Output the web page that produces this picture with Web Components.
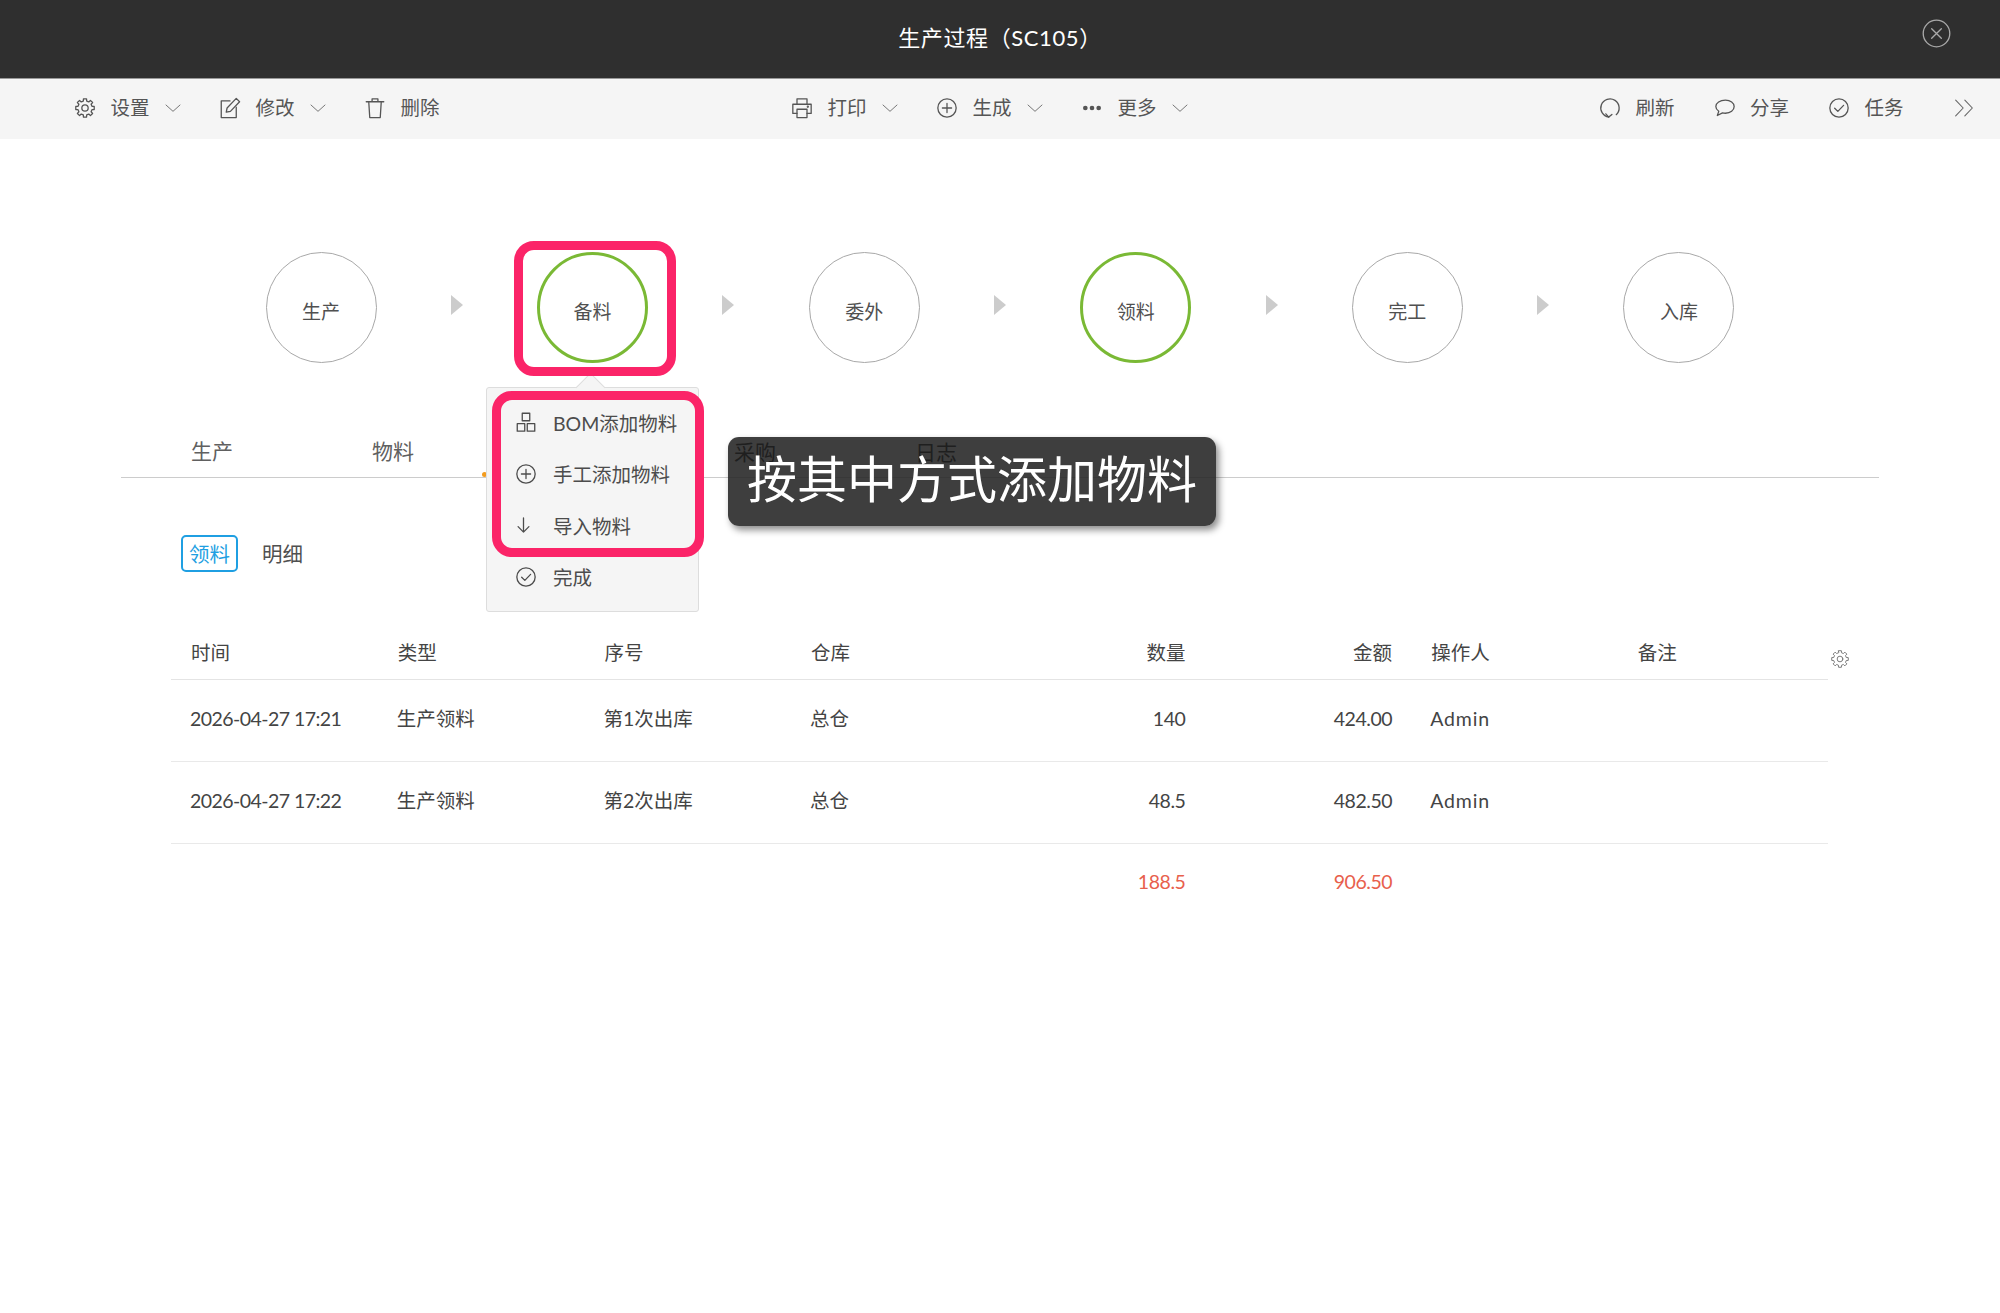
<!DOCTYPE html>
<html lang="zh-CN"><head><meta charset="utf-8"><title>生产过程</title>
<style>html,body{margin:0;padding:0;background:#fff}</style></head>
<body><sc-app></sc-app>
<script>
const FONT='Lato,"Noto Sans CJK SC",sans-serif';
function gear(){let p=[];const n=8;for(let i=0;i<n;i++){const a=i/n*2*Math.PI;const s=Math.PI/n;
[[11.2,-.42],[11.2,.42],[8.6,.6],[8.6,1.4]].forEach(([r,o])=>{const t=a+o*s;p.push((12+r*Math.sin(t)).toFixed(2)+' '+(12-r*Math.cos(t)).toFixed(2));});}
return `<path d="M${p.join('L')}Z"/><circle cx="12" cy="12" r="3.8"/>`;}
const ICONS={
gear:gear(),
edit:'<path d="M12 3.500H1.500v20h18V11"/><path d="M7.500 17l1-5L19.500.5l4 4L12.500 16z"/>',
trash:'<path d="M8.500 4.500V1h7v3.500M1.500 4.500h21M4.500 4.500l1.200 19h12.600l1.200-19"/>',
print:'<path d="M6 7.500V1h12v6.500M6 18.500H1V7.500h22v11h-5"/><path d="M6 13.500h12v10H6z"/><circle cx="19" cy="10.500" r=".6"/>',
plus:'<circle cx="12" cy="12" r="11"/><path d="M12 6.500v11M6.500 12h11"/>',
dots:'<circle cx="4" cy="12" r="2.800" fill="currentColor" stroke="none"/><circle cx="12" cy="12" r="2.800" fill="currentColor" stroke="none"/><circle cx="20" cy="12" r="2.800" fill="currentColor" stroke="none"/>',
chev:'<path d="M1.500 7.500L12 17L22.500 7.500"/>',
refresh:'<path d="M10.500 22.900A11 11 0 1 1 19.500 20"/><path d="M7 19l3.500 3.900 3.800-3.200"/>',
chat:'<path d="M12.500 2.500c6 0 10.500 3.300 10.500 7.800s-4.500 8-10.500 8c-1.300 0-2.500-.2-3.500-.5L2.800 21l1.700-5C2.300 14.500 1 12.500 1 10.300 1 5.800 6 2.500 12.500 2.500z"/>',
check:'<circle cx="12" cy="12" r="11"/><path d="M6.800 12.300l3.800 3.800L17.500 8.800"/>',
dbl:'<path d="M2 2.500l9 9.500-9 9.500M13 2.500l9 9.500-9 9.500"/>',
close:'<circle cx="12" cy="12" r="11"/><path d="M8 8l8 8M16 8l-8 8"/>',
bom:'<path d="M7.500 1.500h9v9h-9zM1.500 14h9v9h-9zM13.500 14h9v9h-9z"/>',
down:'<path d="M9 3.500v17M2.500 14L9 20.500 15.500 14"/>'
};
class ScIcon extends HTMLElement{
  constructor(){super();this.attachShadow({mode:'open'});}
  connectedCallback(){const n=this.getAttribute('name'),s=this.getAttribute('size')||20,w=this.getAttribute('sw')||1.55;
    this.shadowRoot.innerHTML=`<style>:host{display:inline-flex;flex:none;width:${s}px;height:${s}px;color:inherit}svg{width:100%;height:100%;display:block;overflow:visible}</style>
    <svg viewBox="0 0 24 24" fill="none" stroke="currentColor" stroke-width="${w}" stroke-linejoin="round" stroke-linecap="round">${ICONS[n]}</svg>`;}
}
customElements.define('sc-icon',ScIcon);

class ScTitlebar extends HTMLElement{
  constructor(){super();this.attachShadow({mode:'open'}).innerHTML=`<style>
  :host{display:grid;grid-template-columns:1fr auto 1fr;height:79px;box-sizing:border-box;background:#2f2f2f;border-bottom:1px solid #999;color:#fff;font:22px ${FONT}}
  .t{grid-column:2;padding-top:23px;line-height:30px;font-weight:400;letter-spacing:.6px}
  .x{grid-column:3;justify-self:end;margin:19px 49px 0 0;color:#a9a9a9}
  </style><div class="t"><slot></slot></div><div class="x"><sc-icon name="close" size="29" sw="1.100"></sc-icon></div>`;}
}
customElements.define('sc-titlebar',ScTitlebar);

class ScTool extends HTMLElement{
  constructor(){super();this.attachShadow({mode:'open'});}
  connectedCallback(){const caret=this.hasAttribute('caret');
    this.shadowRoot.innerHTML=`<style>
    :host{display:inline-flex;align-items:center;color:#555;font:19.500px/30px ${FONT}}
    .l{margin:0 16px 0 15.500px;width:38px;white-space:nowrap}
    :host(:not([caret])) .l{margin-right:0}
    .c{color:#777}
    </style><sc-icon name="${this.getAttribute('icon')}"></sc-icon><span class="l"><slot></slot></span>${caret?'<sc-icon class="c" name="chev" size="16" sw="1.500"></sc-icon>':''}`;}
}
customElements.define('sc-tool',ScTool);

class ScToolbar extends HTMLElement{
  constructor(){super();this.attachShadow({mode:'open'}).innerHTML=`<style>
  :host{display:grid;grid-template-columns:717px 808px 1fr;align-items:center;height:60px;box-sizing:border-box;padding:0 27px 2px 75px;background:#f5f5f5}
  .g{display:flex;align-items:center;gap:39.500px}
  .r{gap:41px}
  .m{margin-left:10px;color:#666;display:flex}
  </style>
  <div class="g"><sc-tool icon="gear" caret>设置</sc-tool><sc-tool icon="edit" caret>修改</sc-tool><sc-tool icon="trash">删除</sc-tool></div>
  <div class="g"><sc-tool icon="print" caret>打印</sc-tool><sc-tool icon="plus" caret>生成</sc-tool><sc-tool icon="dots" caret>更多</sc-tool></div>
  <div class="g r"><sc-tool icon="refresh">刷新</sc-tool><sc-tool icon="chat">分享</sc-tool><sc-tool icon="check">任务</sc-tool><span class="m"><sc-icon name="dbl" size="20" sw="1.300"></sc-icon></span></div>`;}
}
customElements.define('sc-toolbar',ScToolbar);

class ScStep extends HTMLElement{
  constructor(){super();this.attachShadow({mode:'open'}).innerHTML=`<style>
  :host{display:flex;align-items:center;width:271.600px;flex:none;color:#505050;font:19px ${FONT}}
  .c{width:111px;height:111px;box-sizing:border-box;border:1.600px solid #a8a8a8;border-radius:50%;display:flex;align-items:center;justify-content:center;padding-top:6px}
  :host([on]) .c{border:3.500px solid #7ab935}
  .a{flex:1;display:flex;justify-content:center;margin-top:-6px}
  .a i{display:block;width:0;height:0;border-left:12px solid #ccc;border-top:10.500px solid transparent;border-bottom:10.500px solid transparent}
  :host([last]) .a i{display:none}
  </style><div class="c"><slot></slot></div><div class="a"><i></i></div>`;}
}
customElements.define('sc-step',ScStep);

class ScSteps extends HTMLElement{
  constructor(){super();this.attachShadow({mode:'open'}).innerHTML=`<style>:host{display:flex;margin:113px 0 0 265.500px}</style><slot></slot>`;}
}
customElements.define('sc-steps',ScSteps);

class ScTabs extends HTMLElement{
  constructor(){super();this.attachShadow({mode:'open'}).innerHTML=`<style>
  :host{display:flex;height:55px;margin:60px 121px 0;box-sizing:border-box;border-bottom:1.500px solid #ccc;font:21px/55px ${FONT};color:#606060}
  </style><slot></slot>`;}
}
customElements.define('sc-tabs',ScTabs);

class ScTab extends HTMLElement{
  constructor(){super();this.attachShadow({mode:'open'}).innerHTML=`<style>
  :host{display:block;width:181px;box-sizing:border-box;padding-left:70px;position:relative}
  :host([dark]){color:#000;margin-top:1px}
  :host([dot])::before{content:"";position:absolute;left:-1px;top:49px;width:5px;height:5px;border-radius:50%;background:#f39c1f}
  </style><slot></slot>`;}
}
customElements.define('sc-tab',ScTab);

class ScSubtabs extends HTMLElement{
  constructor(){super();this.attachShadow({mode:'open'}).innerHTML=`<style>
  :host{display:flex;align-items:center;gap:24px;margin:57px 0 0 181px;height:37px;color:#505050;font:20.500px ${FONT}}
  span{padding-bottom:2px}
  .on{width:57px;height:37px;box-sizing:border-box;border:2px solid #1f9fe2;border-radius:5px;color:#1f9fe2;display:flex;align-items:center;justify-content:center}
  </style><span class="on">领料</span><span>明细</span>`;}
}
customElements.define('sc-subtabs',ScSubtabs);

class ScTable extends HTMLElement{
  constructor(){super();this.attachShadow({mode:'open'}).innerHTML=`<style>
  :host{display:flex;align-items:flex-start;margin:54px 0 0 171px;color:#444;font:19.500px ${FONT}}
  .tb{width:1657px;flex:none}
  .r{display:grid;grid-template-columns:repeat(8,206.700px);height:82px;box-sizing:border-box;border-bottom:1.500px solid #e9e9e9;align-items:center;padding-bottom:4px}
  .r>span{padding:0 20px 0 19px;white-space:nowrap;line-height:28px}
  .h{height:54px;padding-bottom:0;border-bottom-color:#e4e4e4;align-items:start}
  .h>span{line-height:54px;padding-left:20px}
  .f{border-bottom:0;height:76px;padding-bottom:0;color:#e8604c}
  .r>.n{text-align:right;padding-right:19px}
  .r>.num{letter-spacing:-.45px}
  .r>.d{letter-spacing:-.55px}
  .r>.a{letter-spacing:.9px}
  sc-icon{margin:24px 0 0 3px;color:#777}
  </style>
  <div class="tb">
  <div class="r h"><span>时间</span><span>类型</span><span>序号</span><span>仓库</span><span class="n">数量</span><span class="n">金额</span><span>操作人</span><span>备注</span></div>
  <div class="r"><span class="d">2026-04-27 17:21</span><span>生产领料</span><span>第1次出库</span><span>总仓</span><span class="n num">140</span><span class="n num">424.00</span><span class="a">Admin</span><span></span></div>
  <div class="r"><span class="d">2026-04-27 17:22</span><span>生产领料</span><span>第2次出库</span><span>总仓</span><span class="n num">48.5</span><span class="n num">482.50</span><span class="a">Admin</span><span></span></div>
  <div class="r f"><span></span><span></span><span></span><span></span><span class="n num">188.5</span><span class="n num">906.50</span><span></span><span></span></div>
  </div><sc-icon name="gear" size="18" sw="1.300"></sc-icon>`;}
}
customElements.define('sc-table',ScTable);

class ScMenuItem extends HTMLElement{
  constructor(){super();this.attachShadow({mode:'open'});}
  connectedCallback(){this.shadowRoot.innerHTML=`<style>
  :host{display:flex;align-items:center;height:51.500px;padding-left:29px;gap:17px;color:#4c4c4c;font:19.500px ${FONT};white-space:nowrap}
  </style><sc-icon name="${this.getAttribute('icon')}"></sc-icon><slot></slot>`;}
}
customElements.define('sc-menu-item',ScMenuItem);

class ScMenu extends HTMLElement{
  constructor(){super();this.attachShadow({mode:'open'}).innerHTML=`<style>
  :host{display:block;position:absolute;left:486px;top:387px;width:213px;height:225px;box-sizing:border-box;padding-top:8.500px;background:#f5f5f5;border:1.500px solid #ddd;border-radius:3px}
  :host::before{content:"";position:absolute;left:93px;top:-11px;width:20px;height:20px;background:#f5f5f5;transform:rotate(45deg);border:1.500px solid #ddd;border-right:0;border-bottom:0}
  </style><slot></slot>`;}
}
customElements.define('sc-menu',ScMenu);

class ScMark extends HTMLElement{
  constructor(){super();this.attachShadow({mode:'open'}).innerHTML=`<style>
  :host{display:block;position:absolute;box-sizing:border-box;border:9px solid #fb2468;border-radius:20px}
  </style>`;}
}
customElements.define('sc-mark',ScMark);

class ScTip extends HTMLElement{
  constructor(){super();this.attachShadow({mode:'open'}).innerHTML=`<style>
  :host{display:flex;position:absolute;left:728px;top:437px;width:488px;height:89px;box-sizing:border-box;padding-bottom:12px;align-items:center;justify-content:center;background:rgba(35,35,35,.88);border-radius:11px;box-shadow:3px 4px 7px rgba(0,0,0,.45);color:#fff;font:400 50px "Noto Sans CJK SC",sans-serif}
  </style><slot></slot>`;}
}
customElements.define('sc-tip',ScTip);

class ScApp extends HTMLElement{
  constructor(){super();this.attachShadow({mode:'open'}).innerHTML=`<style>
  :host{display:block;position:relative;width:2000px;height:1313px;overflow:hidden;background:#fff}
  .m1{left:514px;top:241px;width:162px;height:135px}
  .m2{left:492px;top:391px;width:212px;height:166px}
  </style>
  <sc-titlebar>生产过程（SC105）</sc-titlebar>
  <sc-toolbar></sc-toolbar>
  <sc-steps><sc-step>生产</sc-step><sc-step on>备料</sc-step><sc-step>委外</sc-step><sc-step on>领料</sc-step><sc-step>完工</sc-step><sc-step last>入库</sc-step></sc-steps>
  <sc-tabs><sc-tab>生产</sc-tab><sc-tab>物料</sc-tab><sc-tab dot></sc-tab><sc-tab dark>采购</sc-tab><sc-tab dark>日志</sc-tab></sc-tabs>
  <sc-subtabs></sc-subtabs>
  <sc-table></sc-table>
  <sc-menu><sc-menu-item icon="bom">BOM添加物料</sc-menu-item><sc-menu-item icon="plus">手工添加物料</sc-menu-item><sc-menu-item icon="down">导入物料</sc-menu-item><sc-menu-item icon="check">完成</sc-menu-item></sc-menu>
  <sc-mark class="m1"></sc-mark><sc-mark class="m2"></sc-mark>
  <sc-tip>按其中方式添加物料</sc-tip>`;}
}
customElements.define('sc-app',ScApp);
</script></body></html>
